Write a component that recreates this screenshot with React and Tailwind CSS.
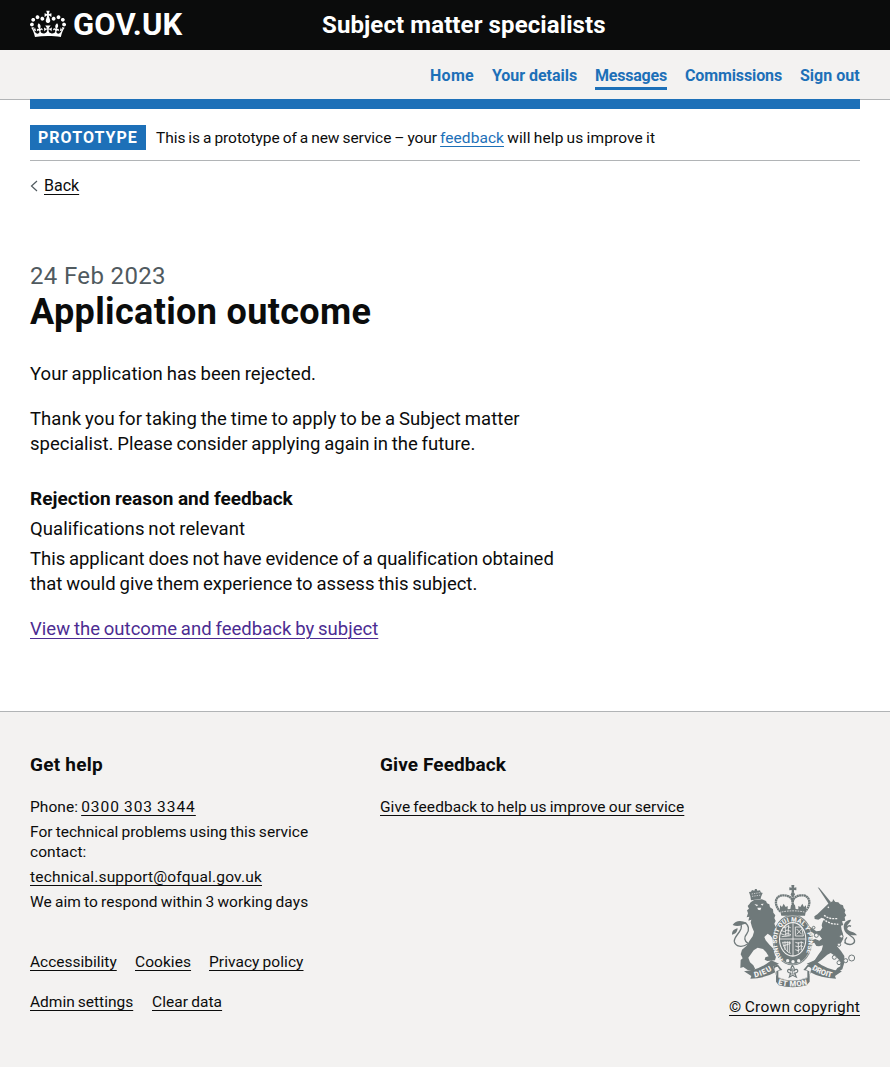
import React from 'react';

function Crown() {
  return (
    <svg className="h-[30px] w-9 shrink-0" viewBox="0 0 132 97" fill="currentColor" aria-hidden="true">
      <path fillRule="evenodd" d="M25 30.2c3.5 1.5 7.7-.2 9.1-3.7 1.5-3.6-.2-7.8-3.9-9.2-3.6-1.4-7.6.3-9.1 3.9-1.4 3.5.3 7.5 3.9 9zM9 39.5c3.6 1.5 7.8-.2 9.2-3.7 1.5-3.6-.2-7.8-3.9-9.1-3.6-1.5-7.6.2-9.1 3.8-1.4 3.5.3 7.5 3.8 9zM4.4 57.2c3.5 1.5 7.7-.2 9.1-3.8 1.5-3.6-.2-7.7-3.9-9.1-3.5-1.5-7.6.3-9.1 3.8-1.4 3.5.3 7.6 3.9 9.1zm38.3-21.4c3.5 1.5 7.7-.2 9.1-3.8 1.5-3.6-.2-7.7-3.9-9.1-3.6-1.5-7.6.3-9.1 3.8-1.3 3.6.4 7.7 3.9 9.1zm64.4-5.6c-3.6 1.5-7.8-.2-9.1-3.7-1.5-3.6.2-7.8 3.8-9.2 3.6-1.4 7.7.3 9.2 3.9 1.3 3.5-.4 7.5-3.9 9zm15.9 9.3c-3.6 1.5-7.7-.2-9.1-3.7-1.5-3.6.2-7.8 3.7-9.1 3.6-1.5 7.7.2 9.2 3.8 1.5 3.5-.3 7.5-3.8 9zm4.7 17.7c-3.6 1.5-7.8-.2-9.2-3.8-1.5-3.6.2-7.7 3.9-9.1 3.6-1.5 7.7.3 9.2 3.8 1.3 3.5-.4 7.6-3.9 9.1zM89.3 35.8c-3.6 1.5-7.8-.2-9.2-3.8-1.4-3.6.2-7.7 3.9-9.1 3.6-1.5 7.7.3 9.2 3.8 1.4 3.6-.3 7.7-3.9 9.1zM69.7 17.7l8.9 4.7V9.3l-8.9 2.8c-.2-.3-.5-.6-.9-.9L72.4 0H59.6l3.5 11.2c-.3.3-.6.5-.9.9l-8.8-2.8v13.1l8.8-4.7c.3.3.6.7.9.9l-5 15.4v.1c-.2.8-.4 1.6-.4 2.4 0 4.1 3.1 7.5 7 8.1h.2c.3 0 .7.1 1 .1.4 0 .7 0 1-.1h.2c4-.6 7.1-4.1 7.1-8.1 0-.8-.1-1.7-.4-2.4V34l-5.1-15.4c.4-.2.7-.6 1-.9zM66 92.8c16.9 0 32.8 1.1 47.1 3.2 4-16.9 8.9-26.7 14-33.5l-9.6-3.4c1 4.9 1.1 7.2 0 10.2-1.5-1.4-3-4.3-4.2-8.7L108.6 76c2.8-2 5-3.2 7.5-3.3-4.4 9.4-10 11.9-13.6 11.2-4.3-.8-6.3-4.6-5.6-7.9 1-4.7 5.7-5.9 8-.5 4.3-8.7-3-11.4-7.6-8.8 7.1-7.2 7.9-13.5 2.1-21.1-8 6.1-8.1 12.3-4.5 20.8-4.7-5.4-12.1-2.5-9.5 6.2 3.4-5.2 7.9-2 7.2 3.1-.6 4.3-6.4 7.8-13.5 7.2-10.3-.9-10.9-8-11.2-13.8 2.5-.5 7.1 1.8 11 7.3L80.2 60c-4.1 4.4-8 5.3-12.3 5.4 1.4-4.4 8-11.6 8-11.6H55.5s6.4 7.2 7.9 11.6c-4.2-.1-8-1-12.3-5.4l1.4 16.4c3.9-5.5 8.5-7.7 10.9-7.3-.3 5.8-.9 12.8-11.1 13.8-7.2.6-12.9-2.9-13.5-7.2-.7-5 3.8-8.3 7.1-3.1 2.7-8.7-4.6-11.6-9.4-6.2 3.7-8.5 3.6-14.7-4.6-20.8-5.8 7.6-5 13.9 2.2 21.1-4.7-2.6-11.9.1-7.7 8.8 2.3-5.5 7.1-4.2 8.1.5.7 3.3-1.3 7.1-5.7 7.9-3.5.7-9-1.8-13.5-11.2 2.5.1 4.7 1.3 7.5 3.3l-4.7-15.4c-1.2 4.4-2.7 7.2-4.3 8.7-1.1-3-.9-5.3 0-10.2l-9.5 3.4c5 6.9 9.9 16.7 14 33.5 14.8-2.1 30.8-3.2 47.7-3.2z" />
    </svg>
  );
}

function RoyalArms() {
  return (
    <svg className="h-[104px] w-[127px]" viewBox="33 27 381 312" fill="#6f797a" stroke="none" aria-hidden="true">
      {/* lion */}
      <path d="M91 63l-4-12 6-1 3-5 7 2 2-5 5 0 2 5 8-1 2 5 6 3-5 12-1 6-29 4z" />
      <path d="M95 57l30-5M96 64l28-4" stroke="#f3f2f1" strokeWidth="2" strokeDasharray="4 3" />
      <path d="M92 82l10-7 24-2 12 5 3 7 7 3 2 9 9 6 1 10 6 8-3 8 4 9-4 8 4 10 8 14 6 18-5 12-8-14-4-10-5 16-7-10-9-6-10 10 4 10 12 14 12 12 3 16 4 7-3 11-23 2-8-4 2-7 10-3-8-13-9-9-16-4-12 8-10 14-6 8 5 14 10 9 6 12-10 4-13-2-13-9-9 3 1-24 6-5-6-12 4-14 14-12 8-14 10-14 4-14-6-14-4-14 2-8-9 3 3-12-8 2 4-12-3-9 6-5-4-8 6-7z" />
      <path d="M103 87l12 3-5 4zM122 87l9-1-4 6zM112 98l12 0-3 8-7-2z" fill="#f3f2f1" />
      <path d="M83 207c-18 12-36 8-40-7-2-13 14-23 20-39 4-12-3-21-14-17M84 205c-11-7-13-18-4-28 9-11 7-28-7-35" fill="none" stroke="#6f797a" strokeWidth="4" />
      <path d="M36 179c0-13 8-17 17-19-1 10-5 17-17 19zM80 144c-16-10-34-8-42 6 18 8 30-2 42-6z" />
      {/* unicorn */}
      <path d="M293 37l5 2 35 43-7 5z" />
      <path d="M327 84l11-5 1-7 7 9 9 1 5 6 9 3 2 8 5 6-2 8 5 8-5 6 2 10-10 2 4 11-7 2 2 12 4 12 1 15-7 13-12 10 12 14 10 15 0 20-6 20-12 8-9-3 6-9 9-5-1-16-13-14-15-10-10 5-18 16-16 11 0 11-18-1 1-10 13-10 11-17 10-13 4-15-12 3-8-1-6-10-9 2 0-9 12-4 12 5 8-6-9-11-15-4-14-10-9 5-2 12-6-4-1-14 10-11 12 3 17 12 12-2 6-9-2-7 2-8 5-12-7-3-10 6-11-2-1-8 9-6z" />
      <path d="M309 132l12 8 14 6 20 2M312 121l10 6 12 4 20 0" fill="none" stroke="#f3f2f1" strokeWidth="4" strokeDasharray="6 3" />
      <circle cx="325" cy="97" r="2.5" fill="#f3f2f1" />
      <path d="M373 202c20 14 35 2 29-10-4-9-24-13-23-28 1-10 8-14 14-10M378 205c-6-8-2-12 3-18" fill="none" stroke="#6f797a" strokeWidth="4" />
      <path d="M374 168c-8-20 2-33 19-34-1 10-14 12-12 27 5 10 23 7 30 20-14 0-30 1-37-13z" />
      <g fill="#f3f2f1" stroke="#6f797a" strokeWidth="3">
        <circle cx="395" cy="249" r="9" /><circle cx="377" cy="257" r="6" /><circle cx="357" cy="263" r="6" /><circle cx="343" cy="247" r="6" />
        <circle cx="357" cy="209" r="5" /><circle cx="364" cy="184" r="5" /><circle cx="281" cy="158" r="4" /><circle cx="289" cy="181" r="6" />
      </g>
      {/* crown over the shield */}
      <path d="M214 30h9l-1 8 7-1v9l-7-1v8h-7v-8l-7 1v-9l7 1z" />
      <circle cx="218.500" cy="58" r="6" />
      <g fill="none" stroke="#6f797a">
        <path d="M181 110C159 87 166 60 190 61c16 0 27 7 28 20 2-13 13-20 29-20 22 0 30 26 8 49" strokeWidth="7" strokeDasharray="6 1" />
        <path d="M218 61v28" strokeWidth="7" strokeDasharray="6 1" />
      </g>
      <path d="M180 105l0-14 6 5 5-10 6 10 6-3 0 10 8-1 2-11 6-7 6 7 2 11 8 1 0-10 6 3 6-10 5 10 6-5 0 14-3 17-71 0z" />
      <path d="M185 111q34-7 68 0" fill="none" stroke="#f3f2f1" strokeWidth="2.500" strokeDasharray="5 3" />
      {/* garter */}
      <ellipse cx="218" cy="195" rx="60" ry="76" />
      <ellipse cx="218" cy="195" rx="57" ry="73" fill="none" stroke="#f3f2f1" strokeWidth="1.500" />
      <ellipse cx="218" cy="193" rx="41" ry="52" fill="#f3f2f1" />
      <ellipse cx="218" cy="193" rx="38" ry="48" />
      <path id="garter" d="M190 253C160 222 163 141 218 140C274 141 276 223 246 253" fill="none" />
      <text fill="#f3f2f1" className="font-black" fontSize="19" wordSpacing="0"><textPath href="#garter" textLength="262">HONI SOIT QUI MAL Y PENSE</textPath></text>
      <g fill="none" stroke="#f3f2f1" strokeWidth="2.500">
        <path d="M219 145v96M179 192h78" />
        <path d="M184 166l9 4 8-5 12 4M183 176l10 4 9-5 11 4M187 156l10 2 5-4 10 4M185 185l27-3M195 153l3 31M206 150l-2 33" />
        <path d="M226 156v27h24M226 156h19l5 27M230 162l15 16M245 162l-15 16" />
        <path d="M188 202c4 18 12 29 24 33M195 199v26M202 199v31M208 199v34M187 202h25M190 213l22-8" />
        <path d="M226 202l10 3 7-4 8 3M226 213l10 3 7-4 6 3M226 224l8 3 7-4M235 201v32M244 200v26" />
      </g>
      <circle cx="203" cy="257" r="5" fill="#f3f2f1" /><circle cx="219" cy="260" r="5" fill="#f3f2f1" /><circle cx="236" cy="257" r="5" fill="#f3f2f1" />
      {/* motto ribbon */}
      <path d="M72 289q45-3 82-33l23 10-18 9 7 17q-31 18-75 19l3-8z" />
      <path d="M366 289q-45-3-82-33l-24 10 18 9-7 17q31 18 77 19l-3-8z" />
      <path d="M160 277q2-8 14-8l13 16-12 2v20q43 18 87 0v-20l-12-2 13-16q14 0 14 8l-8 24 0 19-9 11q-42 12-84 0l-8-11v-19z" />
      <path d="M163 281q2-6 10-6l6 9-10 5 0 14zM274 281q-2-6-10-6l-6 9 10 5 0 14z" fill="#f3f2f1" />
      <path d="M176 308q42 16 86 0" fill="none" stroke="#f3f2f1" strokeWidth="2" />
      <path id="dieu" d="M104 307q28-5 56-24" fill="none" />
      <path id="mon" d="M173 328q44 13 92 0" fill="none" />
      <path id="droit" d="M275 283q29 19 62 25" fill="none" />
      <g fill="#f3f2f1" className="font-black" fontSize="23">
        <text><textPath href="#dieu" textLength="57">DIEU</textPath></text>
        <text><textPath href="#mon" textLength="91">ET MON</textPath></text>
        <text><textPath href="#droit" textLength="65">DROIT</textPath></text>
      </g>
      <path d="M217 271q9 9 4 18 8-10 12-3 2 7-9 8l5 12-11-5-10 5 4-12q-11-1-9-8 4-7 11 3-4-9 3-18z" fill="#f3f2f1" stroke="#6f797a" strokeWidth="3.500" />
      <path d="M209 297h19M218 280v16" stroke="#6f797a" strokeWidth="2.500" />
    </svg>
  );
}

const under = 'underline decoration-1 underline-offset-[3px]';

function NavLink({ children, className, active }) {
  return (
    <a href="#" className={`h-10 shrink-0 whitespace-nowrap pt-4 leading-5 ${active ? 'border-b-[3px] border-[#1d70b8]' : ''} ${className}`}>
      {children}
    </a>
  );
}

export default function App() {
  return (
    <div className="flex min-h-[1067px] flex-col bg-white font-['Roboto',sans-serif] text-base text-[#0b0c0c] [font-kerning:normal]">
      <header className="flex h-[50px] bg-[#0b0c0c] px-[30px] text-white">
        <a href="#" className="flex w-[292px] gap-[7px] pt-[9px]">
          <Crown />
          <span className="text-[31px] leading-[31px] font-bold tracking-[0.2px]">GOV.UK</span>
        </a>
        <a href="#" className="pt-2.5 text-2xl leading-[30px] font-bold tracking-[0.1px]">Subject matter specialists</a>
      </header>

      <nav className="flex h-[50px] justify-end gap-[18px] border-b border-[#b1b4b6] bg-[#f3f2f1] px-[30px] font-bold text-[#1d70b8]">
        <NavLink className="w-11 tracking-[0.3px]">Home</NavLink>
        <NavLink className="w-[85px] tracking-[-0.04px]">Your details</NavLink>
        <NavLink active className="w-[72px] tracking-[-0.21px]">Messages</NavLink>
        <NavLink className="w-[97px] tracking-[-0.12px]">Commissions</NavLink>
        <NavLink className="w-[60px]">Sign out</NavLink>
      </nav>

      <div className="px-[30px]">
        <div className="-mt-px h-2.5 bg-[#1d70b8]" />
        <div className="flex items-center gap-2.5 border-b border-[#b1b4b6] pt-4 pb-2.5">
          <strong className="w-[116px] bg-[#1d70b8] px-2 leading-[25px] tracking-[1.03px] text-white">PROTOTYPE</strong>
          <span className="whitespace-pre pt-px text-[15.5px] leading-5 tracking-[-0.05px] [word-spacing:-0.8px]">
            This is a prototype of a new service – your{' '}
            <a href="#" className={`tracking-[0.05px] text-[#1d70b8] ${under}`}>feedback</a>
            <span className="tracking-[0.12px]"> will help us improve it</span>
          </span>
        </div>
        <a href="#" className="mt-[15px] flex items-center leading-5">
          <svg className="mr-1.5 h-3 w-2" viewBox="0 0 8 12" fill="none" stroke="#505a5f" strokeWidth="1.2" aria-hidden="true">
            <path d="M7 1L1.500 6L7 11" />
          </svg>
          <span className={under}>Back</span>
        </a>
      </div>

      <main className="mt-[65px] px-[30px] text-[18.5px] leading-[25px] tracking-[0.04px] [word-spacing:-0.8px]">
        <p className="text-2xl leading-[30px] tracking-[0.35px] text-[#505a5f] [word-spacing:0]">24 Feb 2023</p>
        <h1 className="pt-px text-4xl leading-10 font-bold tracking-[0.35px] [word-spacing:0]">Application outcome</h1>
        <p className="mt-[30px]">Your application has been rejected.</p>
        <p className="mt-5">
          <span className="tracking-[0.07px]">Thank you for taking the time to apply to be a Subject matter</span><br />
          <span className="tracking-[0px]">specialist. Please consider applying again in the future.</span>
        </p>
        <h2 className="mt-[29px] text-[19px] font-bold tracking-[0.02px] [word-spacing:-0.3px]">Rejection reason and feedback</h2>
        <p className="mt-1.5 tracking-[0.07px]">Qualifications not relevant</p>
        <p className="mt-[5px]">
          <span className="tracking-[-0.02px]">This applicant does not have evidence of a qualification obtained</span><br />
          <span className="tracking-[0px]">that would give them experience to assess this subject.</span>
        </p>
        <a href="#" className={`mt-5 block w-fit tracking-[0.02px] text-[#4c2c92] ${under}`}>View the outcome and feedback by subject</a>
      </main>

      <footer className="mt-[69px] flex-1 border-t border-[#b1b4b6] bg-[#f3f2f1] px-[30px] pt-10 text-[15.5px] leading-5 tracking-[0.06px] [word-spacing:-0.8px]">
        <div className="flex h-40">
          <section className="w-[350px]">
            <h2 className="text-[19px] leading-[25px] font-bold tracking-[0.25px] [word-spacing:0]">Get help</h2>
            <div className="mt-5 flex flex-col gap-[5px]">
              <p>Phone: <a href="#" className={`tracking-[0.98px] ${under}`}>0300 303 3344</a></p>
              <p><span className="tracking-[0.02px]">For technical problems using this service</span><br />contact:</p>
              <a href="#" className={`w-fit tracking-[0.18px] ${under}`}>technical.support@ofqual.gov.uk</a>
              <p>We aim to respond within 3 working days</p>
            </div>
          </section>
          <section>
            <h2 className="text-[19px] leading-[25px] font-bold tracking-[0.1px] [word-spacing:0]">Give Feedback</h2>
            <a href="#" className={`mt-5 block ${under}`}>Give feedback to help us improve our service</a>
          </section>
        </div>
        <div className="flex items-start justify-between">
          <div className="mt-10 flex flex-col gap-5 whitespace-nowrap">
            <div className="flex gap-[18px]">
              <a href="#" className={`w-[87px] tracking-[0px] ${under}`}>Accessibility</a>
              <a href="#" className={`w-14 ${under}`}>Cookies</a>
              <a href="#" className={under}>Privacy policy</a>
            </div>
            <div className="flex gap-[18px]">
              <a href="#" className={`w-[104px] tracking-[0px] ${under}`}>Admin settings</a>
              <a href="#" className={under}>Clear data</a>
            </div>
          </div>
          <a href="#" className="-mt-7 flex flex-col items-center gap-[9px]">
            <RoyalArms />
            <span className={`whitespace-nowrap tracking-[0.25px] ${under}`}>© Crown copyright</span>
          </a>
        </div>
      </footer>
    </div>
  );
}
